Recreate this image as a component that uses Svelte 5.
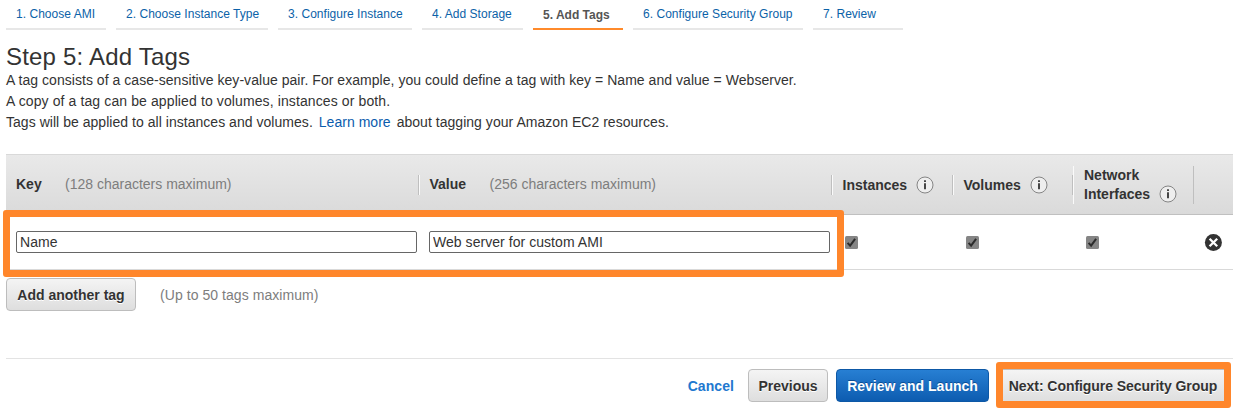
<script>
  const steps = [
    { label: '1. Choose AMI', width: 100 },
    { label: '2. Choose Instance Type', width: 152 },
    { label: '3. Configure Instance', width: 134 },
    { label: '4. Add Storage', width: 101 },
    { label: '5. Add Tags', width: 90, active: true },
    { label: '6. Configure Security Group', width: 170 },
    { label: '7. Review', width: 90 }
  ];
  const resources = ['Instances', 'Volumes', 'Network Interfaces'];
  let key = 'Name';
  let value = 'Web server for custom AMI';
</script>

{#snippet info()}
  <svg class="info" width="18" height="18" viewBox="0 0 18 18" aria-hidden="true">
    <circle cx="9" cy="9" r="8" fill="#eee" stroke="#858585" stroke-width="1" />
    <path d="M8.1 7.2h1.8v6.1H8.1zM8.1 4.3h1.8v1.8H8.1z" fill="#333" />
  </svg>
{/snippet}

<main>
  <nav>
    {#each steps as step}
      <a class:active={step.active} style="width:{step.width}px">{step.label}</a>
    {/each}
  </nav>

  <h1>Step 5: Add Tags</h1>
  <div class="intro">
    <p class="l1">A tag consists of a case-sensitive key-value pair. For example, you could define a tag with key = Name and value = Webserver.</p>
    <p class="l2">A copy of a tag can be applied to volumes, instances or both.</p>
    <p class="l3">Tags will be applied to all instances and volumes. <a>Learn more</a> about tagging your Amazon EC2 resources.</p>
  </div>

  <section class="table">
    <div class="cols head">
      <div class="cell text"><b class="k">Key</b><span>(128 characters maximum)</span></div>
      <div class="cell text val"><b class="v">Value</b><span>(256 characters maximum)</span></div>
      {#each resources as name, i}
        <div class="cell res" class:tall={i === 2}><b>{name}</b>{@render info()}</div>
      {/each}
      <div class="cell"></div>
    </div>
    <div class="cols row">
      <div class="field"><input type="text" bind:value={key} /></div>
      <div class="field"><input type="text" bind:value={value} /></div>
      {#each resources as _}
        <div class="check">
          <svg width="13" height="13" viewBox="0 0 13 13">
            <rect width="13" height="13" rx="1.5" fill="#858585" />
            <path d="M2.6 6.9l2.5 2.7 5-6.7" fill="none" stroke="#2b2b2b" stroke-width="2" />
          </svg>
        </div>
      {/each}
      <div class="remove">
        <svg width="18" height="18" viewBox="0 0 18 18">
          <circle cx="9.4" cy="8.5" r="8.5" fill="#333" />
          <path d="M5.6 4.7l7.6 7.6M13.2 4.7l-7.6 7.6" stroke="#fff" stroke-width="2.3" />
        </svg>
      </div>
    </div>
    <div class="ring fields"></div>
  </section>

  <div class="add">
    <button>Add another tag</button>
    <span>(Up to 50 tags maximum)</span>
  </div>

  <footer>
    <a>Cancel</a>
    <button class="prev">Previous</button>
    <button class="primary">Review and Launch</button>
    <div class="nextwrap">
      <button class="next">Next: Configure Security Group</button>
      <div class="ring nextring"></div>
    </div>
  </footer>
</main>

<style>
  :global(body) { margin: 0; background: #fff; }
  main {
    width: 1233px; height: 413px; overflow: hidden; box-sizing: border-box; padding-left: 6px;
    display: flex; flex-direction: column;
    font: 14px/21px "Liberation Sans", Arial, sans-serif; color: #333;
  }
  main * { box-sizing: border-box; }
  nav { display: flex; gap: 10px; height: 30px; flex: none; }
  nav a {
    height: 30px; padding: 4px 0 0 10px; border-bottom: 2px solid #e7e7e7;
    font-size: 12px; line-height: 20px; color: #0b62a8; white-space: nowrap; letter-spacing: 0.03px;
  }
  nav a.active { font-weight: bold; color: #555; border-color: #ff8a2b; padding-top: 5px; letter-spacing: 0; }
  h1 { margin: 13px 0 0; font-size: 24px; line-height: 27px; font-weight: normal; letter-spacing: 0.2px; }
  .intro { height: 84px; flex: none; }
  p { margin: 0; white-space: nowrap; }
  .l1 { letter-spacing: 0.04px; }
  .l2 { letter-spacing: 0.11px; }
  .l3 { letter-spacing: 0.035px; }
  .intro a { color: #0b5cad; margin: 0 2px; }
  .table { position: relative; flex: none; }
  .cols { display: grid; grid-template-columns: 413px 413px 121px 120px 121px 39px; }
  .head {
    height: 61px; align-items: center; border-top: 1px solid #d9d9d9; border-bottom: 1px solid #c0c0c0;
    background: linear-gradient(#e9e9e9, #dadada);
  }
  .cell { height: 20px; display: flex; align-items: center; padding-left: 10px; border-right: 1px solid #bfbfbf; }
  .cell + .cell { border-left: 1px solid #fafafa; padding-left: 9.5px; }
  .cell:last-child { border-right: 0; border-left: 0; }
  .text span, .add span { color: #7d7d7d; }
  .k { width: 49px; }
  .v { width: 60px; }
  .text b, .text span { white-space: nowrap; }
  .res { line-height: 19px; }
  .res b { position: relative; top: 1px; }
  .info { flex: none; margin-left: 9px; }
  .cell.tall { height: 38px; padding-left: 10px; }
  .tall b { width: 75px; top: 0; }
  .tall .info { align-self: flex-end; margin-bottom: 1px; margin-left: 0; }
  .row { height: 55px; border-bottom: 1px solid #d9d9d9; }
  .field { padding: 16px 2px 0 10px; }
  input {
    display: block; width: 401px; height: 22px; padding: 0 3px; border: 1px solid #666; border-radius: 2px;
    font: 14px/20px "Liberation Sans", Arial, sans-serif; color: #333; background: #fff; outline: 0; letter-spacing: 0.05px;
  }
  .check { padding: 21px 0 0 13px; }
  .check svg, .remove svg { display: block; }
  .remove { padding: 19px 0 0 10px; }
  .ring { position: absolute; border: 7px solid #ff862b; border-radius: 3px; pointer-events: none; }
  .fields { left: -3px; top: 56px; width: 841px; height: 67px; }
  .add { display: flex; align-items: center; gap: 24px; margin-top: 8px; height: 33px; flex: none; }
  .add span { padding-top: 1px; letter-spacing: 0.06px; }
  button {
    height: 33px; padding: 0; border: 1px solid #bdbdbd; border-radius: 4px;
    background: linear-gradient(#f4f4f4, #dedede); color: #333;
    font: bold 14px/20px "Liberation Sans", Arial, sans-serif; white-space: nowrap; text-shadow: 0 1px #fff;
  }
  .add button { width: 130px; }
  footer {
    display: flex; align-items: center; margin: 47px 0 0; border-top: 1px solid #e3e3e3;
    padding: 10px 9px 0 0; justify-content: flex-end;
  }
  footer a { color: #2178cf; font-weight: bold; margin-right: 14px; padding-top: 1px; letter-spacing: 0.07px; }
  .prev { width: 80px; margin-right: 8px; }
  .primary {
    width: 153px; color: #fff; border-color: #0d58a6; background: linear-gradient(#277fd3, #0d5cb0);
    margin-right: 14px; text-shadow: 0 -1px #0b4d94;
  }
  .nextwrap { position: relative; height: 33px; }
  .next { width: 221px; border-radius: 0; border-left: 0; border-right: 0; border-bottom: 0; padding-right: 1px; letter-spacing: -0.05px; }
  .nextring { left: -7px; top: -7px; width: 235px; height: 46px; }
</style>
